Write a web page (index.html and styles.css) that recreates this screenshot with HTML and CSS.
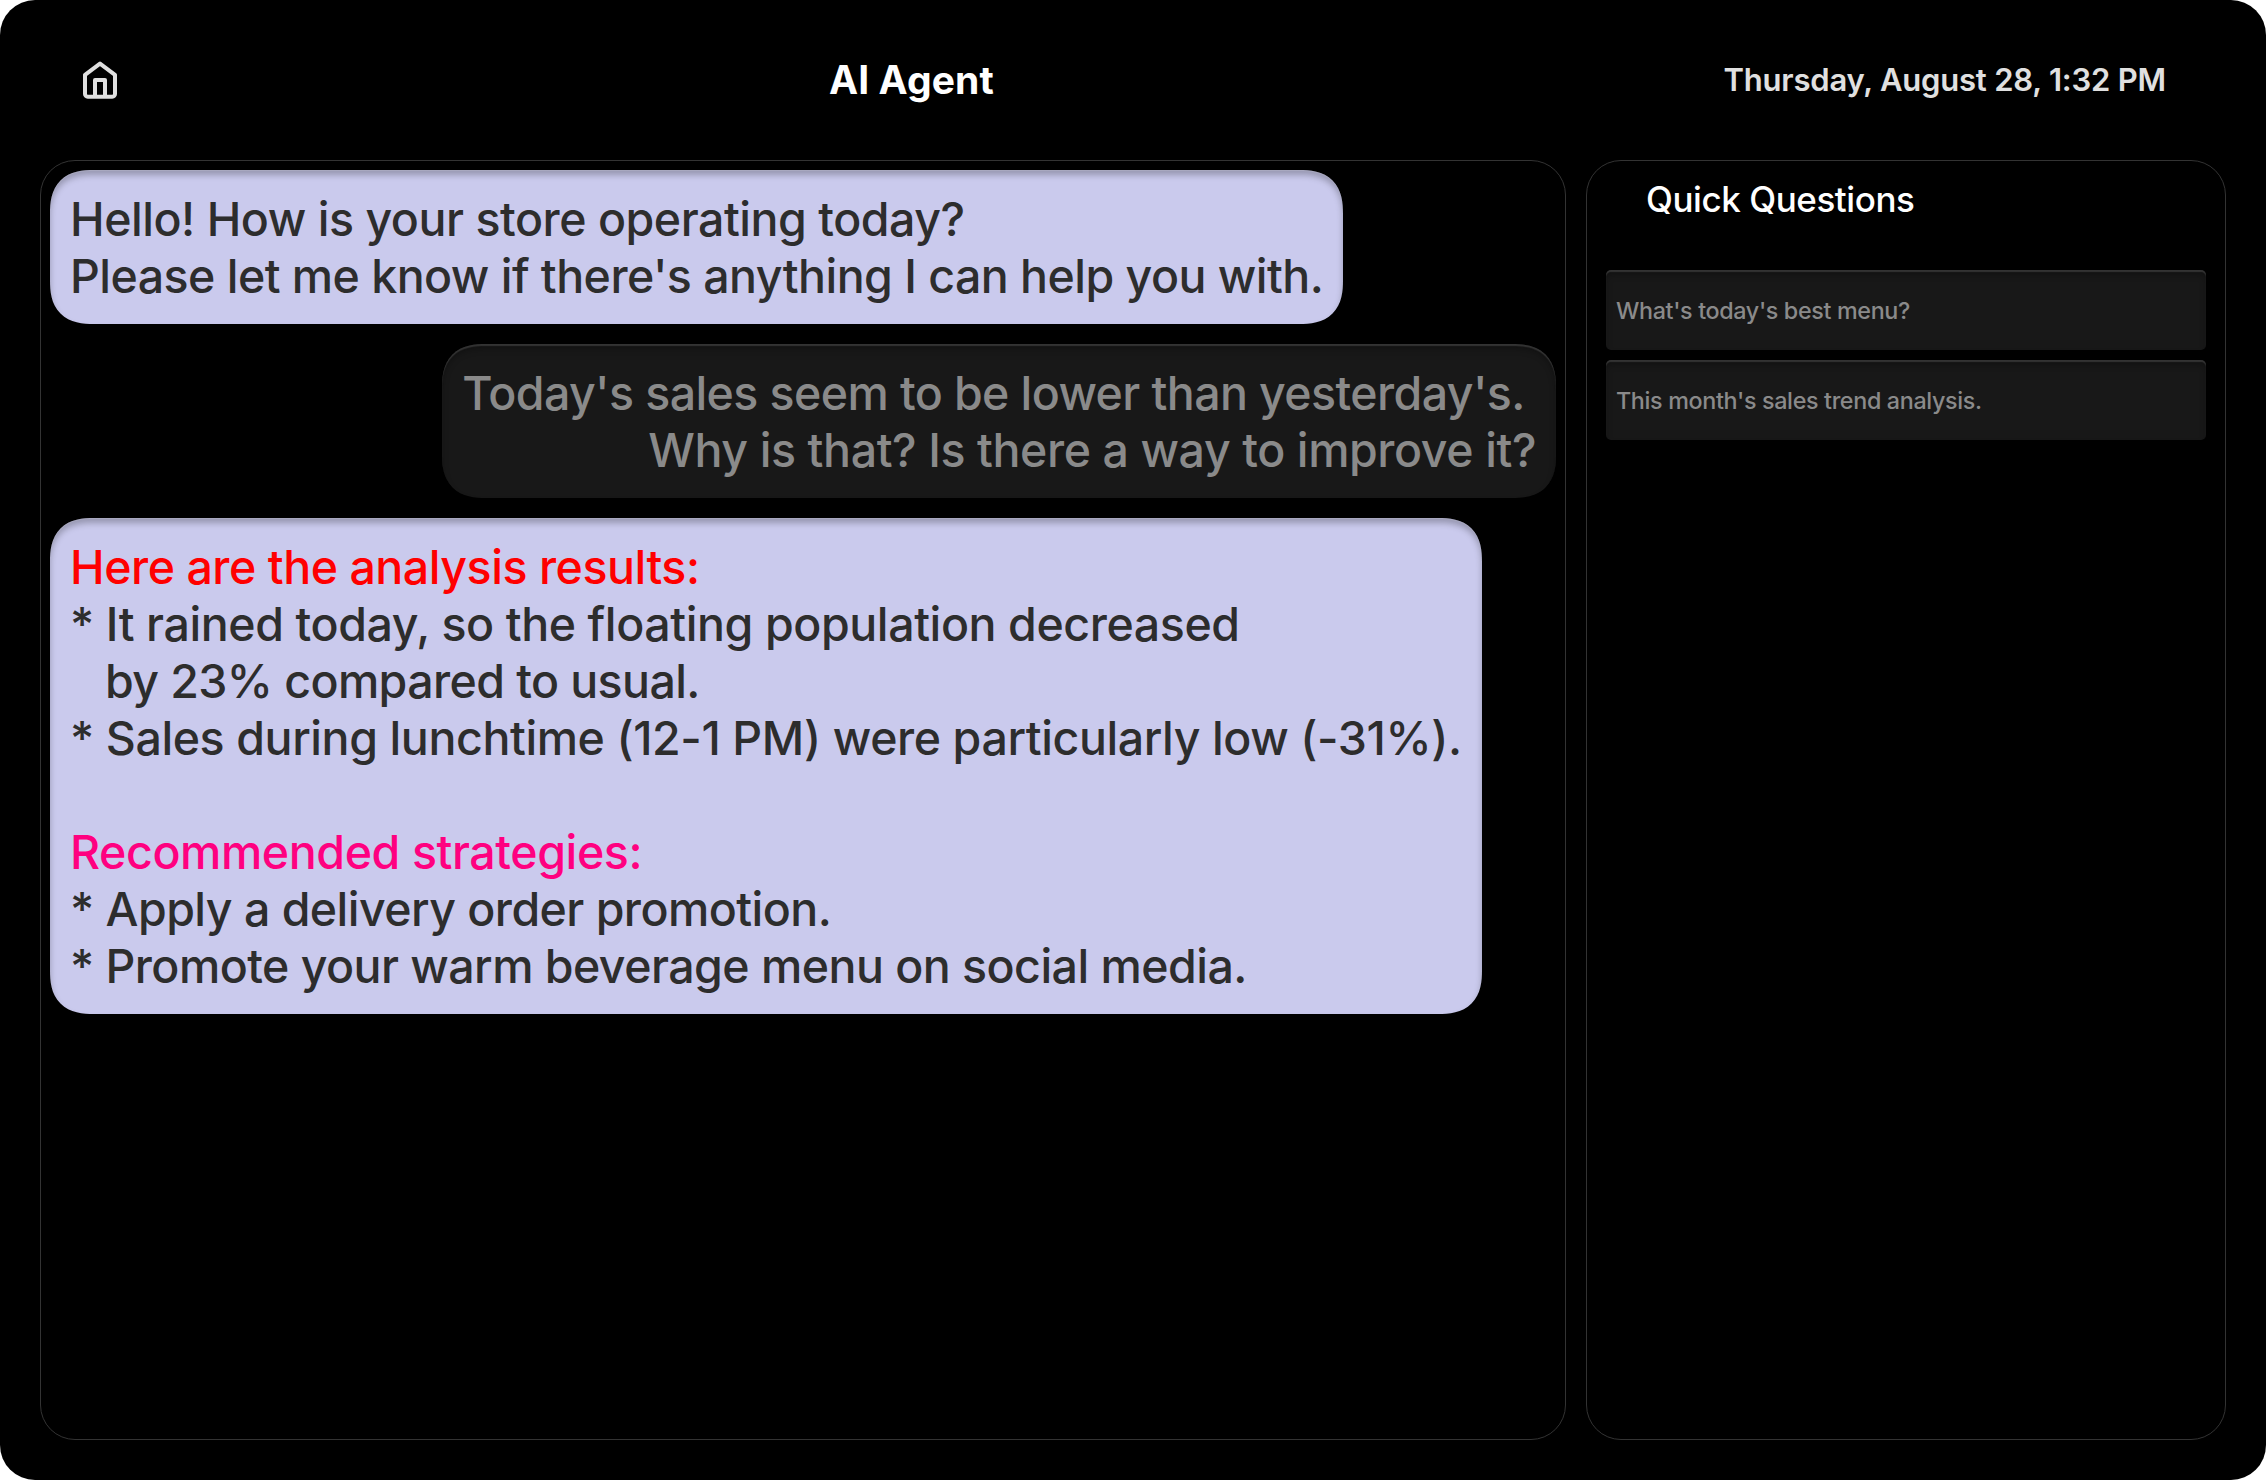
FILE: index.html
```html
<!DOCTYPE html>
<html lang="en">
<head>
<meta charset="utf-8">
<title>AI Agent</title>
<link rel="stylesheet" href="styles.css">
</head>
<body>
<div class="screen">
  <header class="header">
    <a class="home" aria-label="Home">
      <svg width="40" height="40" viewBox="0 0 40 40" fill="none" stroke="currentColor" stroke-width="4" stroke-linejoin="round">
        <path d="M5 14.8 20 3.6l15 11.2V34a2.700 2.700 0 0 1-2.700 2.700H7.700A2.700 2.700 0 0 1 5 34Z"/>
        <path d="M15 36V20h10v16"/>
      </svg>
    </a>
    <h1 class="title">AI Agent</h1>
    <time class="date">Thursday, August 28, 1:32 PM</time>
  </header>
  <main class="content">
    <section class="panel chat">
      <div class="bubble agent">Hello! How is your store operating today?
<span class="tight">Please let me know if there's anything I can help you with.</span></div>
      <div class="bubble user"><span class="tighter">Today's sales seem to be lower than yesterday's. </span>
<span class="loose">Why is that? Is there a way to improve it?</span></div>
      <div class="bubble agent"><span class="results">Here are the analysis results:</span>
<span class="loose">* It rained today, so the floating population decreased</span>
<span class="indent tighter">by 23% compared to usual.</span>
<span class="loose">* Sales during lunchtime (12-1 PM) were particularly low (-31%).</span>

<span class="strategies loose">Recommended strategies:</span>
<span class="tight">* Apply a delivery order promotion.</span>
<span class="tight">* Promote your warm beverage menu on social media.</span></div>
    </section>
    <aside class="panel quick">
      <h2 class="quick-title">Quick Questions</h2>
      <button class="question">What's today's best menu?</button>
      <button class="question">This month's sales trend analysis.</button>
    </aside>
  </main>
</div>
</body>
</html>
```
FILE: styles.css
```css
* { box-sizing: border-box; }

body {
  margin: 0;
  background: #fff;
  font-family: Inter, "Liberation Sans", sans-serif;
}

.screen {
  width: 2266px;
  height: 1480px;
  padding: 0 40px 40px;
  display: flex;
  flex-direction: column;
  background: #000;
  border-radius: 35px;
}

.header {
  height: 160px;
  padding: 0 60px 0 40px;
  display: grid;
  grid-template-columns: 749px auto 1fr;
  align-items: center;
}

.home {
  display: block;
  width: 40px;
  height: 40px;
  color: #e0e0e0;
}

.title {
  margin: 0;
  padding-bottom: 2px;
  font-size: 39px;
  font-weight: 750;
  letter-spacing: 0.1px;
  color: #fff;
}

.date {
  justify-self: end;
  padding-bottom: 2px;
  white-space: nowrap;
  font-size: 31px;
  font-weight: 590;
  letter-spacing: -0.2px;
  color: #e0e0e0;
}

.content {
  flex: 1;
  display: grid;
  grid-template-columns: 1fr 640px;
  gap: 20px;
}

.panel {
  display: flex;
  flex-direction: column;
  border: 1px solid #333;
  border-radius: 35px;
}

.chat {
  gap: 20px;
  padding: 9px;
}

.bubble {
  padding: 21px 20px 19px;
  border-radius: 44px;
  corner-shape: superellipse(1.35);
  font-size: 46.5px;
  line-height: 57px;
  font-weight: 500;
  letter-spacing: -0.47px;
  white-space: pre;
}

.loose { letter-spacing: -0.41px; }
.tight { letter-spacing: -0.54px; }
.tighter { letter-spacing: -0.6px; }

.agent {
  align-self: flex-start;
  background: #cacaed;
  color: #2d2d2d;
  box-shadow: inset 0 1px 1px rgba(255, 255, 255, .15), inset 0 5px 6px rgba(0, 0, 0, .26);
}

.user {
  align-self: flex-end;
  background: #181818;
  color: #8a8a8a;
  text-align: right;
  box-shadow: inset 0 2px 1px #333, inset 0 5px 6px rgba(0, 0, 0, .26);
}

.results { color: #f00; }
.strategies { color: #ff0080; }
.indent { padding-left: 35px; }

.quick {
  padding: 0 19px;
  gap: 10px;
}

.quick-title {
  margin: 0 0 20px;
  height: 79px;
  padding: 16px 0 0 40px;
  font-size: 35px;
  line-height: 44px;
  font-weight: 500;
  letter-spacing: -0.44px;
  color: #fff;
}

.question {
  height: 80px;
  padding: 0 10px;
  border: 0;
  border-radius: 5px;
  background: #181818;
  color: #8a8a8a;
  font: 500 23.3px Inter, "Liberation Sans", sans-serif;
  letter-spacing: -0.34px;
  text-align: left;
  box-shadow: inset 0 2px 1px #333, inset 0 5px 6px rgba(0, 0, 0, .26);
}
```
